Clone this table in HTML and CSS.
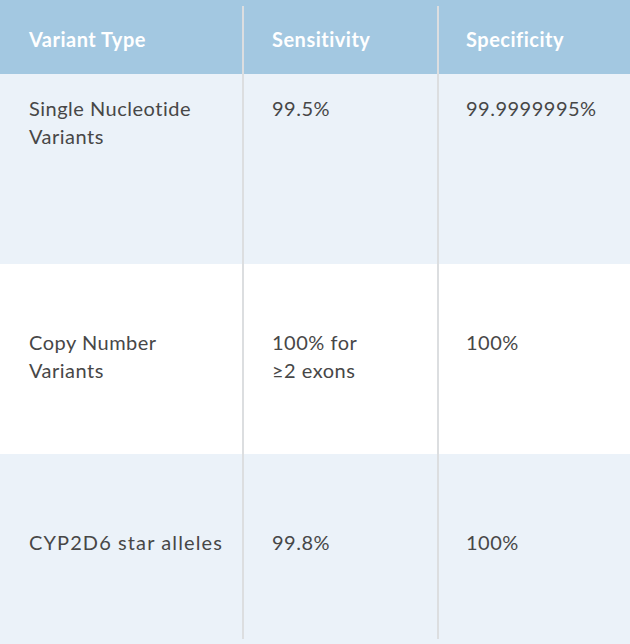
FILE: index.html
```html
<!DOCTYPE html>
<html lang="en">
<head>
<meta charset="utf-8">
<title>Variant detection performance</title>
<link rel="stylesheet" href="styles.css">
</head>
<body>
<div class="table">
  <div class="row head">
    <div class="cell">Variant Type</div>
    <div class="cell c2">Sensitivity</div>
    <div class="cell">Specificity</div>
  </div>
  <div class="row tint r1">
    <div class="cell">Single Nucleotide<br>Variants</div>
    <div class="cell c2">99.5%</div>
    <div class="cell">99.9999995%</div>
  </div>
  <div class="row r2">
    <div class="cell">Copy Number<br>Variants</div>
    <div class="cell c2">100% for<br>≥2 exons</div>
    <div class="cell">100%</div>
  </div>
  <div class="row tint r3">
    <div class="cell wide">CYP2D6 star alleles</div>
    <div class="cell c2">99.8%</div>
    <div class="cell">100%</div>
  </div>
  <div class="divider d1"></div>
  <div class="divider d2"></div>
</div>
</body>
</html>
```
FILE: styles.css
```css
* { box-sizing: border-box; }
html, body { margin: 0; padding: 0; background: #ffffff; }
body {
  font-family: Lato, "Noto Sans", sans-serif;
  color: #474747;
  width: 630px;
  height: 644px;
  overflow: hidden;
}
.table {
  position: relative;
  width: 630px;
}
.row {
  display: grid;
  grid-template-columns: 242px 195px 193px;
  align-items: start;
  height: 190px;
}
.row.head {
  height: 74px;
  padding-top: 25px;
  background: #a3c8e1;
  color: #ffffff;
  font-weight: 700;
}
.row.tint { background: #ebf2f9; }
.r1 { padding-top: 20px; }
.r2 { padding-top: 64px; }
.r3 { padding-top: 74px; }
.cell {
  padding-left: 29px;
  padding-right: 6px;
  font-size: 20px;
  line-height: 28px;
  letter-spacing: 0.5px;
}
.c2 { padding-left: 30px; }
.cell.wide { letter-spacing: 1.1px; }
.divider {
  position: absolute;
  top: 6px;
  bottom: 5px;
  width: 2px;
  background: #dcdee0;
}
.d1 { left: 242px; }
.d2 { left: 437px; }
```
